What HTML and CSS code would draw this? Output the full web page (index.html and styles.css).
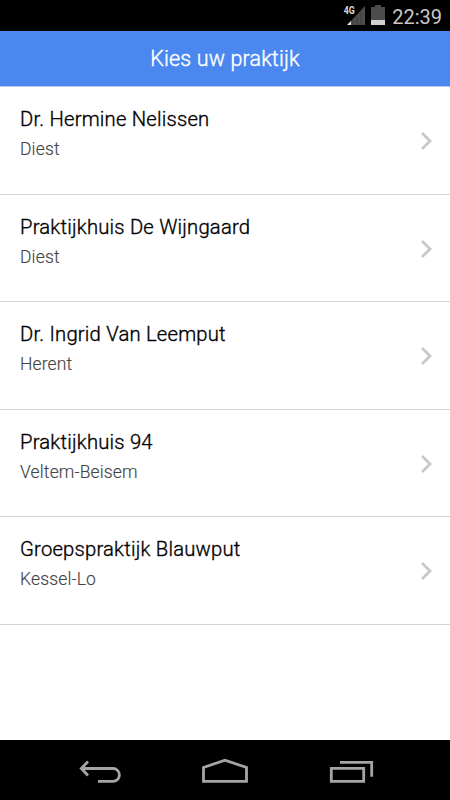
FILE: index.html
```html
<!DOCTYPE html>
<html lang="nl">
<head>
    <meta charset="UTF-8">
    <meta name="viewport" content="width=device-width, initial-scale=1.0">
    <title>Kies uw praktijk</title>
    <link rel="stylesheet" href="styles.css">
</head>
<body>
    <div class="statusbar">
        <svg class="signal" width="24" height="22" viewBox="0 0 24 22">
            <path d="M4 21 L22 2 V21 Z" fill="#4c4c4c"/>
            <path d="M10 21 V15 M14 21 V11 M18 21 V7" stroke="#333" stroke-width="0.6"/>
            <path d="M4 21 L8 17 V21 Z" fill="#ddd"/>
            <text class="network" x="0.7" y="10.3" textLength="11" lengthAdjust="spacingAndGlyphs">4G</text>
        </svg>
        <svg class="battery" width="14" height="20" viewBox="0 0 14 20">
            <path d="M0 2 H4 V0 H10 V2 H14 V20 H0 Z" fill="#4c4c4c"/>
            <rect y="15" width="14" height="5" fill="#d0d0d0"/>
        </svg>
        <span class="clock">22:39</span>
    </div>

    <header class="header">
        <h1>Kies uw praktijk</h1>
    </header>

    <ul class="list">
        <li class="item">
            <div class="info">
                <h2>Dr. Hermine Nelissen</h2>
                <p>Diest</p>
            </div>
            <svg class="arrow" width="12" height="20" viewBox="0 0 12 20"><path d="M2 2 L10 10 L2 18"/></svg>
        </li>
        <li class="item">
            <div class="info">
                <h2>Praktijkhuis De Wijngaard</h2>
                <p>Diest</p>
            </div>
            <svg class="arrow" width="12" height="20" viewBox="0 0 12 20"><path d="M2 2 L10 10 L2 18"/></svg>
        </li>
        <li class="item">
            <div class="info">
                <h2>Dr. Ingrid Van Leemput</h2>
                <p>Herent</p>
            </div>
            <svg class="arrow" width="12" height="20" viewBox="0 0 12 20"><path d="M2 2 L10 10 L2 18"/></svg>
        </li>
        <li class="item">
            <div class="info">
                <h2>Praktijkhuis 94</h2>
                <p>Veltem-Beisem</p>
            </div>
            <svg class="arrow" width="12" height="20" viewBox="0 0 12 20"><path d="M2 2 L10 10 L2 18"/></svg>
        </li>
        <li class="item">
            <div class="info">
                <h2>Groepspraktijk Blauwput</h2>
                <p>Kessel-Lo</p>
            </div>
            <svg class="arrow" width="12" height="20" viewBox="0 0 12 20"><path d="M2 2 L10 10 L2 18"/></svg>
        </li>
    </ul>

    <nav class="navbar">
        <svg class="key" width="46" height="26" viewBox="0 0 46 26">
            <path d="M12 4.5 L5.3 11.5 L12 18.5 M5.3 11.5 H37 A6.4 6.4 0 0 1 37 24.3 H22"/>
        </svg>
        <svg class="key" width="46" height="26" viewBox="0 0 46 26">
            <path d="M1.5 24.3 V10.5 L23 3.2 L44.5 10.5 V24.3 Z"/>
        </svg>
        <svg class="key" width="46" height="26" viewBox="0 0 46 26">
            <path d="M3.3 11.4 H35.7 V24.3 H3.3 Z M12 5.4 H43.7 V19.7"/>
        </svg>
    </nav>
</body>
</html>
```

FILE: styles.css
```css
* {
    box-sizing: border-box;
    margin: 0;
    padding: 0;
}

body {
    display: flex;
    flex-direction: column;
    height: 800px;
    font-family: Roboto, sans-serif;
    background-color: #fff;
    overflow: hidden;
}

.statusbar {
    display: flex;
    align-items: flex-start;
    justify-content: flex-end;
    height: 31px;
    padding-right: 8px;
    background-color: #000;
}

.signal {
    margin-top: 4px;
    margin-right: 4px;
}

.network {
    font-size: 11px;
    font-weight: bold;
    fill: #d8d8d8;
}

.battery {
    margin-top: 5px;
    margin-right: 7px;
}

.clock {
    font-size: 20px;
    line-height: 34px;
    color: #c8c8c8;
}

.header {
    height: 56px;
    background-color: #4a87ee;
    border-bottom: 1px solid #b4c8ec;
    text-align: center;
}

.header h1 {
    font-size: 21.5px;
    font-weight: 300;
    line-height: 56px;
    letter-spacing: 0.15px;
    color: #fff;
    -webkit-text-stroke: 0.4px #fff;
}

.list {
    flex: 1;
    list-style: none;
}

.item {
    display: flex;
    justify-content: space-between;
    height: 107.5px;
    padding: 20px 18px 0 20px;
    border-bottom: 1px solid #d4d4d4;
}

.item h2 {
    font-size: 20.25px;
    font-weight: 300;
    line-height: 25px;
    letter-spacing: 0.2px;
    color: #000;
    -webkit-text-stroke: 0.35px #000;
}

.item p {
    margin-top: 6px;
    font-size: 17.5px;
    font-weight: 300;
    line-height: 22px;
    letter-spacing: 0.15px;
    color: #444;
    -webkit-text-stroke: 0.15px #444;
}

.arrow {
    margin-top: 24px;
    fill: none;
    stroke: #c8c8c8;
    stroke-width: 2.8;
}

.navbar {
    display: flex;
    justify-content: center;
    gap: 80px;
    height: 60px;
    padding-top: 17px;
    background-color: #000;
}

.key {
    fill: none;
    stroke: #a5a5a5;
    stroke-width: 2.8;
}
```
